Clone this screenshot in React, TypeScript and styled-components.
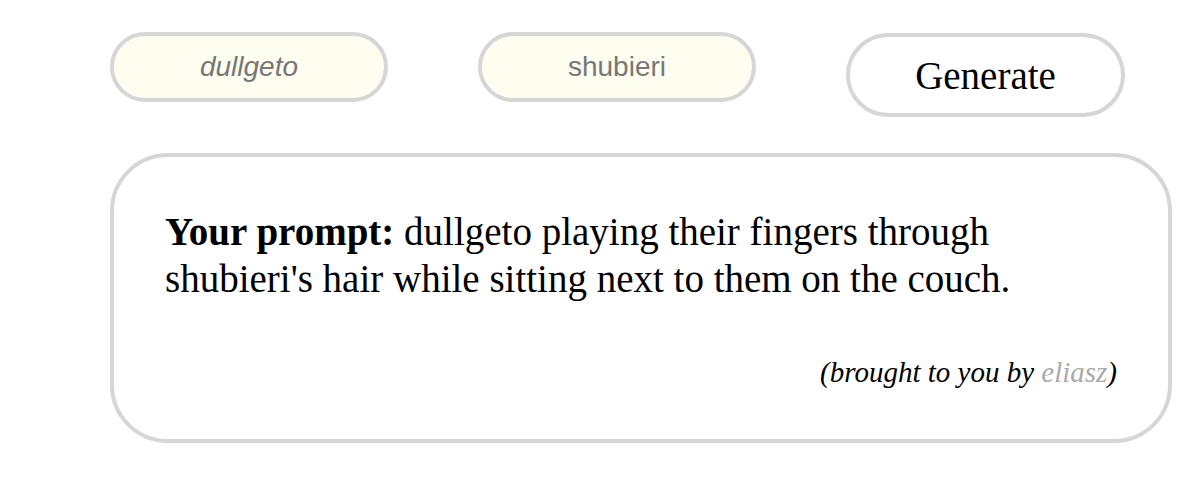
import React from 'react'
import styled, { createGlobalStyle } from 'styled-components'

const GlobalStyle = createGlobalStyle`
  body {
    margin: 0;
    background: #ffffff;
    font-family: "Liberation Serif", "Times New Roman", serif;
  }
`

const Page = styled.div`
  padding: 32px 0 0 110px;
  width: 1062px;
`

const ButtonRow = styled.div`
  display: flex;
  align-items: flex-start;
  gap: 90px;
`

const NameButton = styled.div<{ $italic?: boolean }>`
  box-sizing: border-box;
  width: 278px;
  height: 70px;
  border: 4px solid #d6d6d6;
  border-radius: 35px;
  background: #fdfdf0;
  display: flex;
  align-items: center;
  justify-content: center;
  font-family: "Liberation Sans", Arial, sans-serif;
  font-size: 28px;
  font-style: ${(p) => (p.$italic ? 'italic' : 'normal')};
  color: #777777;
`

const GenerateButton = styled.div`
  box-sizing: border-box;
  width: 279px;
  height: 84px;
  margin-top: 1px;
  border: 4px solid #d6d6d6;
  border-radius: 42px;
  background: #ffffff;
  display: flex;
  align-items: center;
  justify-content: center;
  font-size: 39px;
  color: #000000;
`

const Card = styled.div`
  box-sizing: border-box;
  margin-top: 36px;
  width: 1062px;
  height: 290px;
  border: 4px solid #d6d6d6;
  border-radius: 58px;
  padding: 51px 51px 0 51px;
`

const Prompt = styled.p`
  margin: 0;
  font-size: 39px;
  line-height: 47px;
  color: #000000;
`

const Label = styled.strong`
  font-weight: 700;
`

const Credit = styled.div`
  margin-top: 54px;
  text-align: right;
  font-size: 29px;
  font-style: italic;
  color: #000000;
`

const Author = styled.span`
  color: #aaaaaa;
`

export default function App() {
  return (
    <>
      <GlobalStyle />
      <Page>
        <ButtonRow>
          <NameButton $italic>dullgeto</NameButton>
          <NameButton>shubieri</NameButton>
          <GenerateButton>Generate</GenerateButton>
        </ButtonRow>
        <Card>
          <Prompt>
            <Label>Your prompt:</Label> dullgeto playing their fingers through shubieri's hair while sitting next to them on the couch.
          </Prompt>
          <Credit>
            (brought to you by <Author>eliasz</Author>)
          </Credit>
        </Card>
      </Page>
    </>
  )
}
